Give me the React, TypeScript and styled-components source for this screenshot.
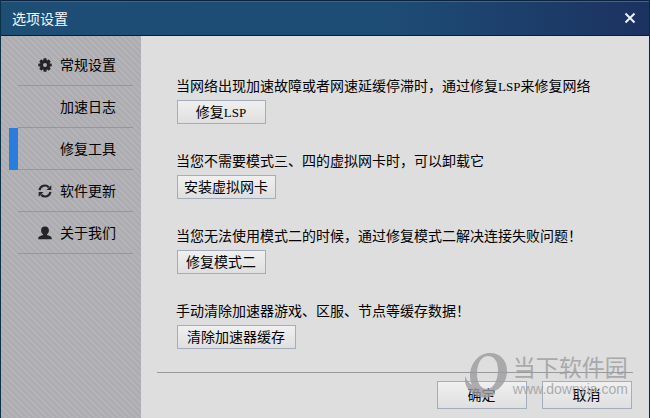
import React from "react";
import styled, { createGlobalStyle } from "styled-components";

const GlobalStyle = createGlobalStyle`
  * { box-sizing: border-box; }
  html, body, #root { height: 100%; margin: 0; }
  body {
    background: #dedede;
    color: #000;
    font: 14px/20px "Noto Sans CJK SC", sans-serif;
  }
  button { font: inherit; color: inherit; }
`;

const Dialog = styled.main`
  min-height: 100%;
  display: flex;
  flex-direction: column;
  border-left: 1px solid #0b3048;
  border-right: 1px solid #06273c;
`;

const TitleBar = styled.header`
  height: 36px;
  flex: none;
  display: flex;
  align-items: center;
  justify-content: space-between;
  padding: 0 11px;
  color: #f4f8fb;
  background: linear-gradient(90deg, #1d4e74 0%, #1d4c74 60%, #1c3261 100%);
  border-top: 1px solid #0a2340;
  border-bottom: 1px solid #06203c;
  box-shadow: inset 0 1px #40648a;
`;

const Title = styled.h1`
  margin: 0;
  font-size: 14px;
  font-weight: 400;
`;

const CloseButton = styled.button`
  display: flex;
  padding: 2px;
  border: 0;
  background: none;
  color: #eef2f8;
`;

const Body = styled.div`
  flex: 1;
  display: flex;
`;

const Sidebar = styled.nav`
  width: 140px;
  flex: none;
  padding-top: 8px;
  background: linear-gradient(45deg, #b4b4b8 25%, #acacb1 25% 50%, #b4b4b8 50% 75%, #acacb1 75%) 0 0 / 6px 6px;
`;

const NavList = styled.ul`
  margin: 0;
  padding: 0 8px;
  list-style: none;
`;

const NavItem = styled.li<{ $active?: boolean }>`
  height: 42px;
  border-left: 9px solid ${(p) => (p.$active ? "#2b7ddb" : "transparent")};
`;

const NavButton = styled.button`
  width: 100%;
  height: 42px;
  display: grid;
  grid-template-columns: 14px 1fr;
  column-gap: 8px;
  align-items: center;
  padding: 0 0 2px 20px;
  border: 0;
  border-bottom: 1px solid #96969c;
  background: none;
  text-align: left;
`;

const IconSlot = styled.span`
  display: flex;
  padding-top: 2px;
  color: #242426;
`;

const Content = styled.section`
  flex: 1;
  display: flex;
  flex-direction: column;
  padding: 39px 16px 0;
`;

const Tools = styled.div`
  flex: 1;
  display: flex;
  flex-direction: column;
  gap: 26px;
  padding-left: 19px;
`;

const Tool = styled.div`
  display: flex;
  flex-direction: column;
  align-items: flex-start;
  gap: 5px;
`;

const Description = styled.p`
  margin: 0;
`;

const Latin = styled.span`
  font: 13px/1 "Liberation Serif", serif;
`;

const PushButton = styled.button<{ $size?: "small" | "medium" | "large" }>`
  height: 24px;
  width: ${(p) => ({ small: 89, medium: 99, large: 119 })[p.$size ?? "small"]}px;
  margin-left: 1px;
  padding: 0 1px 2px 0;
  line-height: 20px;
  white-space: nowrap;
  border: 1px solid #a3adbb;
  background: linear-gradient(#f0f0f1, #dfdfe0);
`;

const Footer = styled.footer`
  position: relative;
  height: 46px;
  display: flex;
  justify-content: flex-end;
  gap: 15px;
  padding: 8px 1px 0 0;
  border-top: 1px solid #9a9a9a;
`;

const FooterButton = styled(PushButton)`
  width: 90px;
  height: 28px;
  margin: 0;
`;

const Watermark = styled.div`
  position: absolute;
  right: 5px;
  bottom: 19px;
  display: flex;
  align-items: flex-end;
  gap: 6px;
  color: #9c9c9f;
  opacity: 0.8;
  pointer-events: none;
`;

const WatermarkText = styled.div`
  display: flex;
  flex-direction: column;
`;

const WatermarkName = styled.span`
  font-size: 23px;
  line-height: 26px;
`;

const WatermarkUrl = styled.span`
  font: 14px/20px "Liberation Sans", sans-serif;
`;

function GearIcon() {
  return (
    <svg width="14" height="14" viewBox="0 0 14 14" aria-hidden="true">
      <g fill="currentColor">
        {[0, 45, 90, 135].map((angle) => (
          <rect key={angle} x="5.4" y="0.3" width="3.2" height="13.4" rx="0.7" transform={`rotate(${angle} 7 7)`} />
        ))}
        <circle cx="7" cy="7" r="5" />
      </g>
      <circle cx="7" cy="7" r="2" fill="#b0b0b4" />
    </svg>
  );
}

function RefreshIcon() {
  return (
    <svg width="14" height="14" viewBox="0 0 14 14" aria-hidden="true">
      <path d="M1.6 6.2A5.3 5.3 0 0 1 10.8 3.3M12.4 7.8A5.3 5.3 0 0 1 3.2 10.7" fill="none" stroke="currentColor" strokeWidth="2.2" />
      <path d="M13.3 1.2V6H8.5ZM.7 12.8V8H5.5Z" fill="currentColor" />
    </svg>
  );
}

function UserIcon() {
  return (
    <svg width="14" height="14" viewBox="0 0 14 14" aria-hidden="true">
      <path d="M7 .5C9.6.5 10.9 2.1 10.9 4.4 10.9 6.1 10.2 7.4 9 8.2V9L12.4 10.2C13.4 10.6 13.8 11.6 13.8 13.2H.2C.2 11.6.6 10.6 1.6 10.2L5 9V8.2C3.8 7.4 3.1 6.1 3.1 4.4 3.1 2.1 4.4.5 7 .5Z" fill="currentColor" />
    </svg>
  );
}

function SwirlLogo() {
  return (
    <svg width="42" height="46" viewBox="0 0 42 46" aria-hidden="true">
      <path
        fillRule="evenodd"
        fill="currentColor"
        d="M25 0C35 0 42 7 42 18C42 30 33 40 21 40C11 40 5 33 5 23C5 10 14 0 25 0ZM23 3C16 3 12 11 12 21C12 30 16 36 22 36C29 36 33 26 33 17C33 8 29 3 23 3Z"
      />
      <path fill="currentColor" d="M0 23C2 28 5 31 8 32C11 38 17 40 27 38C32 40 31 42 25 44C17 46 9 43 5 38C1 34 -1 29 0 23Z" />
    </svg>
  );
}

const navItems = [
  { label: "常规设置", icon: <GearIcon /> },
  { label: "加速日志" },
  { label: "修复工具", active: true },
  { label: "软件更新", icon: <RefreshIcon /> },
  { label: "关于我们", icon: <UserIcon /> },
];

export default function App() {
  return (
    <>
      <GlobalStyle />
      <Dialog>
        <TitleBar>
          <Title>选项设置</Title>
          <CloseButton type="button" aria-label="关闭">
            <svg width="12" height="12" viewBox="0 0 12 12" aria-hidden="true">
              <path d="M1.5 1.5L10.5 10.5M10.5 1.5L1.5 10.5" stroke="currentColor" strokeWidth="2" />
            </svg>
          </CloseButton>
        </TitleBar>
        <Body>
          <Sidebar>
            <NavList>
              {navItems.map((item) => (
                <NavItem key={item.label} $active={item.active}>
                  <NavButton type="button" aria-current={item.active ? "page" : undefined}>
                    <IconSlot>{item.icon}</IconSlot>
                    {item.label}
                  </NavButton>
                </NavItem>
              ))}
            </NavList>
          </Sidebar>
          <Content>
            <Tools>
              <Tool>
                <Description>
                  当网络出现加速故障或者网速延缓停滞时，通过修复<Latin>LSP</Latin>来修复网络
                </Description>
                <PushButton type="button">
                  修复<Latin>LSP</Latin>
                </PushButton>
              </Tool>
              <Tool>
                <Description>当您不需要模式三、四的虚拟网卡时，可以卸载它</Description>
                <PushButton type="button" $size="medium">安装虚拟网卡</PushButton>
              </Tool>
              <Tool>
                <Description>当您无法使用模式二的时候，通过修复模式二解决连接失败问题！</Description>
                <PushButton type="button">修复模式二</PushButton>
              </Tool>
              <Tool>
                <Description>手动清除加速器游戏、区服、节点等缓存数据！</Description>
                <PushButton type="button" $size="large">清除加速器缓存</PushButton>
              </Tool>
            </Tools>
            <Footer>
              <FooterButton type="button">确定</FooterButton>
              <FooterButton type="button">取消</FooterButton>
              <Watermark>
                <SwirlLogo />
                <WatermarkText>
                  <WatermarkName>当下软件园</WatermarkName>
                  <WatermarkUrl>www.downxia.com</WatermarkUrl>
                </WatermarkText>
              </Watermark>
            </Footer>
          </Content>
        </Body>
      </Dialog>
    </>
  );
}
